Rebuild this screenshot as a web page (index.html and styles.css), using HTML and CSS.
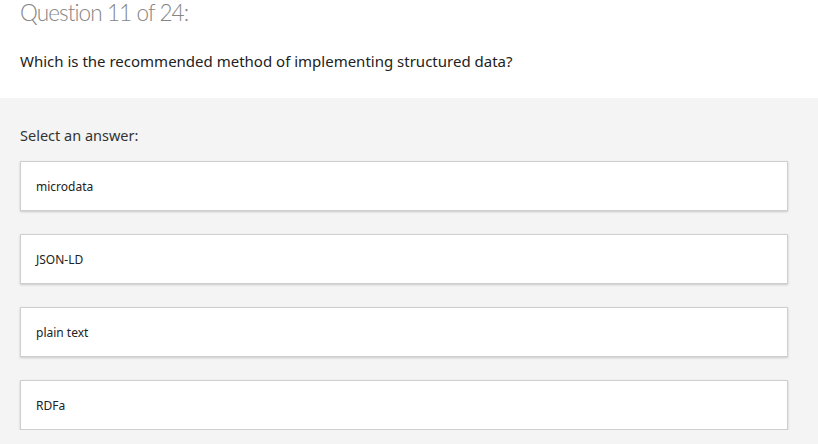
FILE: index.html
```html
<!DOCTYPE html>
<html>
<head>
<meta charset="utf-8">
<link rel="stylesheet" href="styles.css">
</head>
<body>
<div class="top">
  <h1 class="title">Question 11 of 24:</h1>
  <p class="question">Which is the recommended method of implementing structured data?</p>
</div>
<div class="answers">
  <p class="prompt">Select an answer:</p>
  <ul class="options">
    <li class="option">microdata</li>
    <li class="option">JSON-LD</li>
    <li class="option">plain text</li>
    <li class="option">RDFa</li>
  </ul>
</div>
</body>
</html>
```
FILE: styles.css
```css
html, body {
  margin: 0;
  padding: 0;
  background: #f4f4f4;
  font-family: "Noto Sans", "Open Sans", sans-serif;
}
.top {
  background: #fff;
  height: 98px;
  padding: 0 20px;
  box-sizing: border-box;
}
.title {
  margin: 0;
  padding-top: 1px;
  font-family: Lato, "Open Sans", sans-serif;
  font-weight: 300;
  font-size: 22.5px;
  letter-spacing: -0.9px;
  line-height: 23px;
  color: #858585;
}
.question {
  margin: 26px 0 0;
  font-size: 15px;
  line-height: 22px;
  color: #222;
}
.answers {
  padding: 26px 30px 0 20px;
}
.prompt {
  margin: 0 0 15px;
  font-size: 14.5px;
  line-height: 22px;
  color: #333;
}
.options {
  list-style: none;
  margin: 0;
  padding: 0;
  display: flex;
  flex-direction: column;
  gap: 23px;
  width: 768px;
}
.option {
  background: #fff;
  border: 1px solid #cfcfcf;
  box-shadow: 0 1px 2px rgba(0,0,0,0.18);
  height: 48px;
  box-sizing: content-box;
  padding: 0 15px;
  display: flex;
  align-items: center;
  font-size: 12px;
  color: #222;
}
```
